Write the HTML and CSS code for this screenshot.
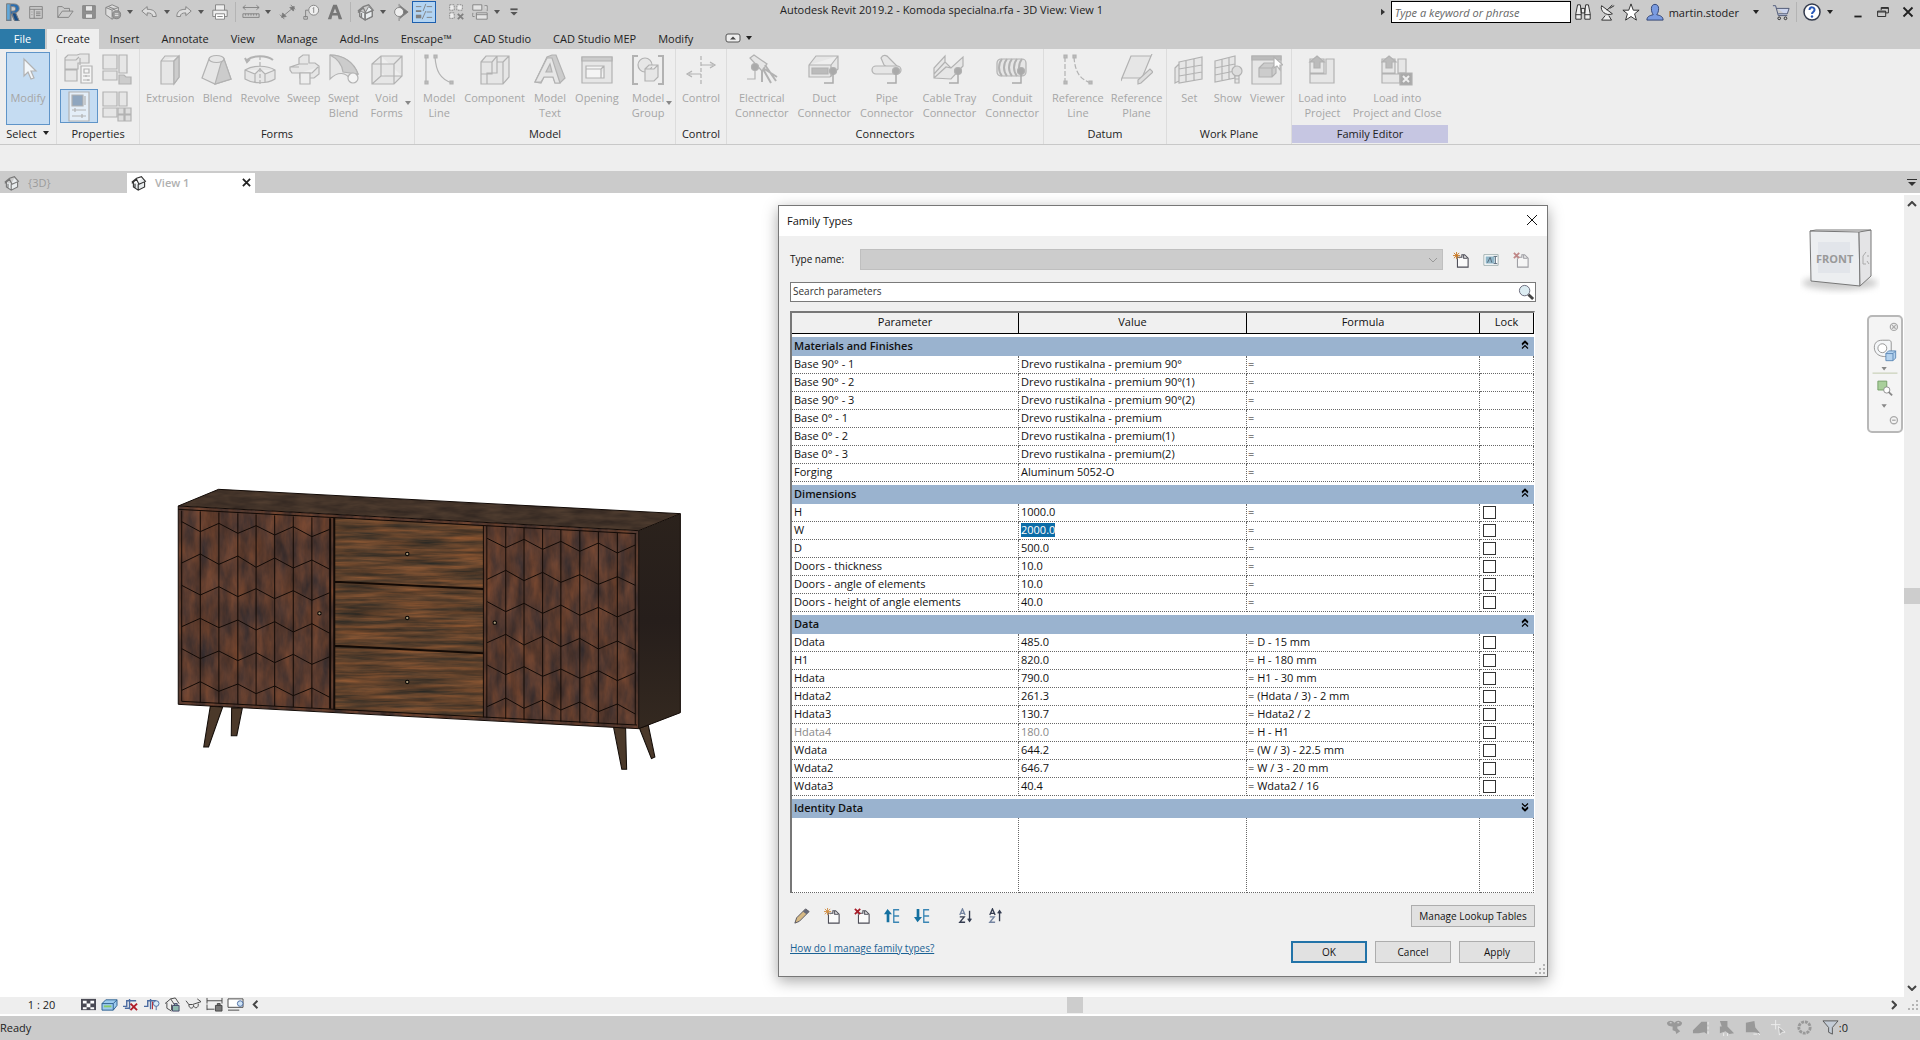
FILE: index.html
```html
<!DOCTYPE html>
<html lang="en">
<head>
    <meta charset="UTF-8">
    <meta name="viewport" content="width=device-width, initial-scale=1.0">
    <title>Autodesk Revit 2019.2 - Komoda specialna.rfa - 3D View: View 1</title>
    <link rel="stylesheet" href="styles.css">
</head>
<body>
    <!-- shared symbols -->
    <svg class="defs" width="0" height="0">
        <symbol id="i-down" viewBox="0 0 8 5"><path d="M1 0h6L4 4z" fill="currentColor"/></symbol>
        <symbol id="i-house" viewBox="0 0 20 20">
            <path d="M3 9v6l6 4V11zM9 19l8-4V8l-4-4-4 7z" fill="#e8ecee"/>
            <path d="M1 9l6-5 6-2 5 6-8 3.500-3-6-6 5M3 9v6l6 4 8-4V8M9 11.500V19M5 11v5" fill="none" stroke="currentColor" stroke-width="1.400"/>
        </symbol>
        <symbol id="i-page" viewBox="0 0 18 18">
            <path d="M4 6h6V3h3l4 4v10H5V7M12 3v4h4" fill="#fafafa" stroke="#4c4c56" stroke-width="1.200"/>
        </symbol>
        <symbol id="i-collapse" viewBox="0 0 8 10"><path d="M1 4l3-3 3 3M1 8.500l3-3 3 3M1 5l3-3 3 3" fill="none" stroke="#000" stroke-width="1.200"/></symbol>
        <symbol id="i-dot" viewBox="0 0 32 32"><circle cx="25" cy="17" r="3.500" fill="#aaa"/><path d="M25 20v9h-9" fill="none" stroke="#aaa" stroke-width="1.500"/></symbol>
    </svg>

    <header class="titlebar">
        <div class="quick-access">
            <button class="tb" aria-label="Revit"><svg viewBox="0 0 20 20"><path d="M4 1h8c4 0 6 2 6 5s-2 4-4 5l4 9h-5l-4-8v8H4zM9 4v5c3 0 5 0 5-2.500S12 4 9 4z" fill="#2a6db0"/><path d="M4 1h4v18H4z" fill="#5fa8dc"/><path d="M10 11l4 0 4 9h-5z" fill="#174c86"/></svg></button>
            <button class="tb" aria-label="Recent"><svg viewBox="0 0 20 20"><path d="M3 4h14v13H3zM3 7h14M8 7v10" /><path d="M10 10h5M10 12h5M10 14h5M5 10h1M5 13h1"/></svg></button>
            <span class="space"></span>
            <button class="tb" aria-label="Open"><svg viewBox="0 0 20 20"><path d="M2 16V4h5l2 2h6v3M2 16l5-7h12l-5 7z"/></svg></button>
            <button class="tb" aria-label="Save"><svg viewBox="0 0 20 20"><path d="M3 3h14v14H3z" fill="#909090"/><path d="M6 3h8v6H6zM6 12h8v5H6z" fill="#e8e8e8"/></svg></button>
            <button class="tb" aria-label="Sync"><svg viewBox="0 0 20 20"><path d="M2 5l7-3 7 3v8l-7 5-7-5zM2 5l7 3 7-3M9 8v10M5 4l7 3" fill="#ddd"/><circle cx="14" cy="13" r="4.500" fill="#999"/><path d="M12 12h4M16 14h-4" stroke="#eee"/></svg></button>
            <button class="tb-arrow" aria-label="Sync options"><svg><use href="#i-down"/></svg></button>
            <span class="space small"></span>
            <button class="tb" aria-label="Undo"><svg viewBox="0 0 20 20"><path d="M2 9l6-5v3c6 0 10 2 10 8h-4c0-3-2-4-6-4v3z" fill="#ddd"/></svg></button>
            <button class="tb-arrow" aria-label="Undo list"><svg><use href="#i-down"/></svg></button>
            <button class="tb" aria-label="Redo"><svg viewBox="0 0 20 20"><path d="M18 9l-6-5v3C6 7 2 9 2 15h4c0-3 2-4 6-4v3z" fill="#ddd"/></svg></button>
            <button class="tb-arrow" aria-label="Redo list"><svg><use href="#i-down"/></svg></button>
            <span class="space small"></span>
            <button class="tb" aria-label="Print"><svg viewBox="0 0 20 20"><path d="M5 8V2h10v6M2 8h16v7H2z" fill="#eee"/><path d="M5 12h10v6H5zM7 15h6" fill="#fff"/></svg></button>
            <span class="sep"></span>
            <button class="tb" aria-label="Measure"><svg viewBox="0 0 20 20"><path d="M1 5h18M4 2.500L1 5l3 2.500M16 2.500L19 5l-3 2.500M1 12h18v4H1zM4 12v2M7 12v2M10 12v2M13 12v2M16 12v2"/></svg></button>
            <button class="tb-arrow" aria-label="Measure options"><svg><use href="#i-down"/></svg></button>
            <span class="space small"></span>
            <button class="tb" aria-label="Aligned dimension"><svg viewBox="0 0 20 20"><path d="M4 15L16 5M1 13l5 5M13 2l5 5"/><path d="M3 16l1-5 4 4zM17 4l-1 5-4-4z" fill="#777"/></svg></button>
            <button class="tb" aria-label="Tag"><svg viewBox="0 0 20 20"><circle cx="13" cy="8" r="5.500" fill="#eee"/><path d="M7 8H4v8M2 15h4v3H2zM12 6l1-1v6"/></svg></button>
            <button class="tb" aria-label="Text"><svg viewBox="0 0 20 20"><path d="M2 18L8 2h4l6 16h-4l-1-4H7l-1 4zM8 11h4l-2-5z" fill="#777" stroke="none"/></svg></button>
            <span class="sep"></span>
            <button class="tb" aria-label="3D view"><svg viewBox="0 0 20 20"><use href="#i-house"/></svg></button>
            <button class="tb-arrow" aria-label="3D options"><svg><use href="#i-down"/></svg></button>
            <button class="tb" aria-label="Section"><svg viewBox="0 0 20 20"><path d="M10 3l9 7-9 7z" fill="#777"/><circle cx="9" cy="10" r="5" fill="#eee"/><path d="M9 1v3M9 16v4"/></svg></button>
            <button class="tb tb-on" aria-label="Thin lines"><svg viewBox="0 0 20 20"><path d="M1 4h6" stroke-width="1"/><path d="M1 9h6" stroke-width="2"/><path d="M1 15h6" stroke-width="4"/><path d="M13 4h6M13 10h6M13 16h6M12 1L9 9M12 9L8 18" /></svg></button>
            <span class="space"></span>
            <span class="space small"></span>
            <button class="tb" aria-label="Close hidden"><svg viewBox="0 0 20 20"><path d="M3 2h5v6H3zM11 2h6v6h-6zM3 11h5v6H3z" fill="#eee" stroke-dasharray="2 1"/><path d="M12 12l6 6M18 12l-6 6" stroke-width="2"/></svg></button>
            <button class="tb" aria-label="Switch windows"><svg viewBox="0 0 20 20"><path d="M2 2h10v6H2zM6 11h12v7H6zM15 3h3v6M2 11v4h2" fill="#e4e4e4"/><path d="M6 13h12"/></svg></button>
            <button class="tb-arrow" aria-label="Windows"><svg><use href="#i-down"/></svg></button>
            <button class="tb" aria-label="Customize"><svg viewBox="0 0 20 20"><path d="M6 7h8" stroke="#555" stroke-width="2"/><path d="M6 10h8l-4 4z" fill="#555" stroke="none"/></svg></button>
        </div>
        <div class="app-title">Autodesk Revit 2019.2 - Komoda specialna.rfa - 3D View: View 1</div>
        <div class="info-center">
            <svg class="expand" viewBox="0 0 5 8"><path d="M0 0l5 4-5 4z" fill="#333"/></svg>
            <input class="help-search" type="text" placeholder="Type a keyword or phrase" aria-label="Help search">
            <button class="tb" aria-label="Search"><svg class="dark" viewBox="0 0 20 20"><path d="M4 2h3l1 8v8H2v-6zM13 2h3l2 10v6h-6v-8zM8 6h4v5H8zM2 13h6M12 13h6" fill="#eee"/></svg></button>
            <button class="tb" aria-label="Communication"><svg class="dark" viewBox="0 0 20 20"><path d="M4 3c-2 6 5 12 12 9zM8 14l-4 5h11l-3-5M10 8l6-6M13 6l5-3" fill="#eee"/></svg></button>
            <button class="tb" aria-label="Favorites"><svg class="dark" viewBox="0 0 20 20"><path d="M10 1l2.500 7H19l-5 4 2 7-6-4-6 4 2-7-5-4h6.500z" fill="#fff"/></svg></button>
            <button class="account"><svg class="dark" viewBox="0 0 20 20"><path d="M6 6c0-6 8-6 8 0 0 4-1 5-2 7 4 1 7 2 7 6H1c0-4 3-5 7-6-1-2-2-3-2-7z" fill="#7a9be0" stroke="#2a3d6e"/></svg><span>martin.stoder</span><svg class="arrow"><use href="#i-down"/></svg></button>
            <button class="tb" aria-label="Store"><svg class="dark" viewBox="0 0 20 20"><path d="M1 3h3l3 11h10M5 6h14l-2 6H7" fill="#ccd5ee" stroke="#46506e"/><circle cx="8" cy="17" r="1.500"/><circle cx="15" cy="17" r="1.500"/></svg></button>
            <span class="sep"></span>
            <button class="tb help" aria-label="Help"><svg viewBox="0 0 20 20"><circle cx="10" cy="10" r="8" fill="#fff" stroke="#333a4c" stroke-width="1.500"/><path d="M7.500 8c0-4 5.500-3 5 0-.3 2-2.500 2-2.500 4" stroke="#2858b8" stroke-width="2"/><circle cx="10" cy="14.500" r="1.200" fill="#2858b8" stroke="none"/></svg></button>
            <button class="tb-arrow" aria-label="Help options"><svg><use href="#i-down"/></svg></button>
            <div class="window-buttons">
                <button class="tb" aria-label="Minimize"><svg viewBox="0 0 20 20"><path d="M6 15h8" stroke="#222" stroke-width="2"/></svg></button>
                <button class="tb" aria-label="Restore"><svg viewBox="0 0 20 20"><path d="M8 8V5h8v6h-3M4 9h9v6H4zM4 10h9M8 6h8" stroke="#222"/></svg></button>
                <button class="tb" aria-label="Close"><svg viewBox="0 0 20 20"><path d="M5 5l10 10M15 5L5 15" stroke="#222" stroke-width="2"/></svg></button>
            </div>
        </div>
    </header>

    <nav class="ribbon-tabs">
        <button class="file-tab">File</button>
        <button class="active">Create</button>
        <button>Insert</button>
        <button>Annotate</button>
        <button>View</button>
        <button>Manage</button>
        <button>Add-Ins</button>
        <button>Enscape™</button>
        <button>CAD Studio</button>
        <button>CAD Studio MEP</button>
        <button>Modify</button>
        <button class="tab-toggle" aria-label="Minimize ribbon"><svg width="16" height="10" viewBox="0 0 16 10"><rect x="1" y="1" width="14" height="8" rx="2" fill="#eee" stroke="#555"/><path d="M5 6.500h6L8 3.500z" fill="#444"/></svg><svg class="arrow"><use href="#i-down"/></svg></button>
    </nav>

    <section class="ribbon">
        <div class="panel panel-select">
            <div class="panel-body">
                <button class="tool modify" disabled><svg viewBox="0 0 32 32"><path d="M12 5v17l4-4 3 7 3-1-3-7h5z" fill="#f2f6fa"/></svg>Modify</button>
            </div>
            <div class="panel-name">Select <svg class="arrow"><use href="#i-down"/></svg></div>
        </div>
        <div class="panel panel-properties">
            <div class="panel-body quad">
                <button disabled aria-label="Family category"><svg viewBox="0 0 32 32"><path d="M2 5l3-3h9l3-1h9v9H15v6H2zM2 17h12v11H2zM2 16V7h11l3-3M17 12V5" /><path d="M18 13h11v17H18zM21 16h5v4h-5zM20 23h7M20 27h7M23 22v2M25 26v2" fill="#f4f4f4"/></svg></button>
                <button disabled aria-label="Family types"><svg viewBox="0 0 32 32"><path d="M2 2h14v14H2zM18 2h8v18h-8zM2 18h14v9H2z"/><path d="M18 22h5l2 2h5v7H18z" fill="#ccc"/></svg></button>
                <button class="on" disabled aria-label="Properties"><svg viewBox="0 0 32 32"><path d="M6 2h20v29H6z" fill="#e4eef8"/><path d="M9 5h11v11H9z" fill="#8fa6bf"/><path d="M22 6v9M9 20h14M12 18v4M9 26h14M19 24v4"/></svg></button>
                <button disabled aria-label="Type list"><svg viewBox="0 0 32 32"><path d="M2 2h14v14H2zM18 2h8v14h-8zM2 18h14v9H2z"/><path d="M17 18h6v6h-6zM24 18h6v6h-6zM17 25h6v6h-6zM24 25h6v6h-6z" fill="#ddd"/></svg></button>
            </div>
            <div class="panel-name">Properties</div>
        </div>
        <div class="panel panel-forms">
            <div class="panel-body packed">
                <button class="tool" disabled><svg viewBox="0 0 32 32"><path d="M7 7l4-5h14v21l-5 7H7zM7 7h13l5-5M20 7v23"/><path d="M20 7l5-5v21l-5 7z" fill="#ccc"/></svg>Extrusion</button>
                <button class="tool" disabled><svg viewBox="0 0 32 32"><path d="M8 5L1 24l13 6 16-5L23 5z"/><path d="M20 9L14 30l16-5-7-20z" fill="#ccc"/><ellipse cx="15.500" cy="5" rx="7.500" ry="3.500"/></svg>Blend</button>
                <button class="tool" disabled><svg viewBox="0 0 32 32"><path d="M1 16c8-5 22-5 30 0v9c-8 5-22 5-30 0zM1 16l10 4 5-5 5 5 10-4M11 20v8M21 20v8"/><path d="M3 6c6-5 20-5 26 0M1 4l2 4 3-3" fill="none" stroke-width="2"/><path d="M16 2v30" stroke-dasharray="4 2"/></svg>Revolve</button>
                <button class="tool" disabled><svg viewBox="0 0 32 32"><path d="M2 13l9-3V4l4-3h6v8h6l4 3v8l-5 4H12v-5H4l-2-3zM11 10h9M12 19h12l6-6M2 13h9"/><path d="M12 19h10v11H12z" fill="#eee"/></svg>Sweep</button>
                <button class="tool" disabled><svg viewBox="0 0 32 32"><path d="M2 1c15 0 24 9 28 19l-7 6C18 18 10 17 2 25z"/><path d="M2 1c8 4 12 9 13 17l15 2C26 8 15 1 2 1z" fill="#ccc"/><circle cx="25" cy="24" r="5" fill="#f4f4f4"/></svg>Swept<br>Blend</button>
                <button class="tool menu" disabled><svg viewBox="0 0 32 32"><path d="M1 10l9-8h21v20l-8 8H1zM1 10h22v20M23 10l8-8M10 2v20h21M10 22l-9 8"/></svg>Void<br>Forms<svg class="arrow"><use href="#i-down"/></svg></button>
            </div>
            <div class="panel-name">Forms</div>
        </div>
        <div class="panel panel-model">
            <div class="panel-body packed wide">
                <button class="tool" disabled><svg viewBox="0 0 32 32"><path d="M3 3v26M12 3c1 14 5 22 17 26" fill="none"/><path d="M2 1h3v3H2zM11 1h3v3h-3zM2 27h3v3H2zM27 27h3v3h-3z" fill="#bbb"/></svg>Model<br>Line</button>
                <button class="tool" disabled><svg viewBox="0 0 32 32"><path d="M2 8l5-6h11v17H8v11H2zM13 20V8l5-6h12v21l-6 7H2V20zM18 8h6v22M24 8l6-6M2 8h11"/></svg>Component</button>
                <button class="tool" disabled><svg viewBox="0 0 32 32"><path d="M1 28L13 3l5-2h4l9 23-5 5h-5l-2-6H10l-3 6z" fill="#ccc"/><path d="M1 28L13 4h5l8 25h-5l-2-6H10l-3 5zM12 18h6l-2-8z"/></svg>Model<br>Text</button>
                <button class="tool" disabled><svg viewBox="0 0 32 32"><path d="M1 3h30v26H1z"/><path d="M1 3h30v4H1z" fill="#ccc"/><path d="M5 12h18v12H5zM23 12l-3 3v9M5 15h15" fill="#f4f4f4"/></svg>Opening</button>
                <button class="tool menu" disabled><svg viewBox="0 0 32 32"><path d="M6 2H1v28h5M26 2h5v28h-5" fill="none" stroke-width="2"/><circle cx="13" cy="11" r="7"/><path d="M13 15l4-4h9v12l-4 4h-9zM13 15h9l4-4" /></svg>Model<br>Group<svg class="arrow"><use href="#i-down"/></svg></button>
            </div>
            <div class="panel-name">Model</div>
        </div>
        <div class="panel panel-control">
            <div class="panel-body">
                <button class="tool" disabled><svg viewBox="0 0 32 32"><path d="M16 2v28" stroke-dasharray="4 2"/><path d="M16 11h12M25 8l5 3-5 3M16 20H4M7 17l-5 3 5 3" /></svg>Control</button>
            </div>
            <div class="panel-name">Control</div>
        </div>
        <div class="panel panel-connectors">
            <div class="panel-body packed wide">
                <button class="tool" disabled><svg viewBox="0 0 32 32"><path d="M4 4l4-3 13 9-5 7z"/><path d="M17 14l14 9M17 15l8 14M16 16v12M19 11l11 16" stroke-width="2"/><circle cx="9" cy="13" r="3.500" fill="#aaa"/><path d="M9 16v9H1" fill="none"/></svg>Electrical<br>Connector</button>
                <button class="tool" disabled><svg viewBox="0 0 32 32"><path d="M1 11l7-9h22v13l-8 8H1zM1 11h22l7-9M23 11v12"/><path d="M4 14h16v6H4z" fill="#bbb"/><use href="#i-dot"/></svg>Duct<br>Connector</button>
                <button class="tool" disabled><svg viewBox="0 0 32 32"><path d="M10 4c2-4 6-3 8 0l9 9-4 6-10-8z"/><rect x="1" y="12" width="29" height="8" rx="4"/><use href="#i-dot"/></svg>Pipe<br>Connector</button>
                <button class="tool" disabled><svg viewBox="0 0 32 32"><path d="M1 24V14L12 2v6l6 6L30 3v9L18 25zM1 24l12-11 5 1M12 8L1 20"/><use href="#i-dot"/></svg>Cable Tray<br>Connector</button>
                <button class="tool" disabled><svg viewBox="0 0 32 32"><rect x="1" y="5" width="29" height="17" rx="4"/><path d="M6 5c-4 5-4 12 0 17M11 5c-4 5-4 12 0 17M16 5c-4 5-4 12 0 17M21 5c-4 5-4 12 0 17M26 5c-4 5-4 12 0 17" stroke-width="2"/><use href="#i-dot"/></svg>Conduit<br>Connector</button>
            </div>
            <div class="panel-name">Connectors</div>
        </div>
        <div class="panel panel-datum">
            <div class="panel-body packed wide">
                <button class="tool" disabled><svg viewBox="0 0 32 32"><path d="M3 3v26M12 3c1 14 5 22 17 26" fill="none" stroke-dasharray="5 2"/><path d="M2 1h3v3H2zM11 1h3v3h-3zM2 27h3v3H2zM27 27h3v3h-3z" fill="#bbb"/></svg>Reference<br>Line</button>
                <button class="tool" disabled><svg viewBox="0 0 32 32"><path d="M10 2h20l-9 22H1zM1 24l-1 3M30 2l1-2"/><path d="M17 30v-4l12-11 3 3-12 11z" fill="#ddd"/></svg>Reference<br>Plane</button>
            </div>
            <div class="panel-name">Datum</div>
        </div>
        <div class="panel panel-workplane">
            <div class="panel-body">
                <button class="tool" disabled><svg viewBox="0 0 32 32"><path d="M2 14l4-4v17l-4 2zM6 8l23-5v22L6 29zM6 15l23-4M6 22l23-4M13 7v21M21 5v21"/></svg>Set</button>
                <button class="tool" disabled><svg viewBox="0 0 32 32"><path d="M3 7l20-5v22L3 28zM3 14l20-4M3 21l20-4M10 5v21M17 3v22"/><circle cx="25" cy="17" r="5" fill="#ddd"/><path d="M23 22h4v7h-4zM23 25h4"/></svg>Show</button>
                <button class="tool" disabled><svg viewBox="0 0 32 32"><path d="M1 2h29v28H1z"/><path d="M1 2h29v4H1z" fill="#bbb"/><path d="M8 14l5-5h12v10l-4 4H8zM8 14h13v9M21 14l4-5" fill="#ccc"/><path d="M23 3v11l3-2 3 4v-5h3z" fill="#fff"/></svg>Viewer</button>
            </div>
            <div class="panel-name">Work Plane</div>
        </div>
        <div class="panel panel-family">
            <div class="panel-body">
                <button class="tool" disabled><svg viewBox="0 0 32 32"><path d="M4 5h14v14H4zM20 5h8v24H4V20h16z"/><path d="M11 2l7 6h-4v6H8V8H4z" fill="#bbb"/></svg>Load into<br>Project</button>
                <button class="tool" disabled><svg viewBox="0 0 32 32"><path d="M1 5h13v14H1zM17 5h8v14h-8zM1 20h18v9H1z"/><path d="M8 2l7 6h-4v6H5V8H1z" fill="#bbb"/><path d="M19 19h12v12H19z" fill="#aaa"/><path d="M22 22l6 6M28 22l-6 6" stroke="#eee" stroke-width="2"/></svg>Load into<br>Project and Close</button>
            </div>
            <div class="panel-name">Family Editor</div>
        </div>
    </section>
    <div class="options-bar"></div>

    <nav class="view-tabs">
        <button class="view-tab faded"><svg viewBox="0 0 20 20"><use href="#i-house"/></svg>{3D}</button>
        <button class="view-tab current"><svg viewBox="0 0 20 20"><use href="#i-house"/></svg>View 1<svg class="close" viewBox="0 0 10 10"><path d="M1 1l8 8M9 1L1 9" stroke="#222" stroke-width="2"/></svg></button>
        <button class="tab-list" aria-label="Tab list"><svg width="10" height="8" viewBox="0 0 10 8"><path d="M0 0h10v1H0zM1 3h8L5 7z" fill="#333"/></svg></button>
    </nav>

    <main class="workspace">
        <div class="view">
            <div class="canvas">
                <svg class="cabinet" viewBox="0 0 1568 960" preserveAspectRatio="none">
                    <defs>
                        <filter id="wood-h" x="0" y="0" width="100%" height="100%" color-interpolation-filters="sRGB">
                            <feTurbulence type="fractalNoise" baseFrequency="0.006 0.08" numOctaves="4" seed="8"/>
                            <feColorMatrix values="0.5 0 0 0 0.12  0.24 0.03 0 0 0.12  0.08 0.04 0 0 0.11  0 0 0 0 1"/>
                            <feComposite in2="SourceGraphic" operator="in"/>
                        </filter>
                        <filter id="wood-v" x="0" y="0" width="100%" height="100%" color-interpolation-filters="sRGB">
                            <feTurbulence type="fractalNoise" baseFrequency="0.03 0.01" numOctaves="4" seed="3"/>
                            <feColorMatrix values="0.36 0 0 0 0.16  0.16 0.03 0 0 0.13  0.04 0.06 0 0 0.13  0 0 0 0 1"/>
                            <feComposite in2="SourceGraphic" operator="in"/>
                        </filter>
                        <filter id="wood-top" x="0" y="0" width="100%" height="100%" color-interpolation-filters="sRGB">
                            <feTurbulence type="fractalNoise" baseFrequency="0.015 0.06" numOctaves="3" seed="5"/>
                            <feColorMatrix values="0.16 0 0 0 0.18  0.12 0 0 0 0.14  0.08 0 0 0 0.12  0 0 0 0 1"/>
                            <feComposite in2="SourceGraphic" operator="in"/>
                        </filter>
                        <linearGradient id="side" x1="0" x2="0" y1="0" y2="1"><stop offset="0" stop-color="#2b221c"/><stop offset="0.500" stop-color="#261e1b"/><stop offset="1" stop-color="#342920"/></linearGradient>
                    </defs>
                    <g fill="#4b392a" stroke="#120c08">
                        <path d="M146 709l36 2-41 120-14 0zM208 713l31 2-16 82h-16zM1317 772l35 2 3 124h-14zM1392 774l26-8 19 95-10 5z" stroke-width="3"/>
                    </g>
                    <path d="M53 108L170 58l1341 73-121 51z" filter="url(#wood-top)"/>
                    <path d="M53 108l1337 74v594L53 703z" filter="url(#wood-v)"/>
                    <path d="M507 143l432 24v576L507 718z" filter="url(#wood-h)"/>
                    <path d="M1390 182l121-51v597l-121 48z" fill="url(#side)"/>
                    <g class="lines">
                        <path d="M53 108L170 58l1341 73-121 51zM53 108v595l1337 73 121-48V131M1390 182v594M53 118l1330 73M63 694l1322 71M63 122v572M1380 192v572"/>
                        <path d="M117 124v573M171 127v573M226 130v572M279 133v572M333 136v572M387 139v572M441 142v572"/>
                        <path d="M1004 171v576M1057 174v576M1111 177v575M1164 180v575M1219 183v575M1273 186v574M1328 189v574"/>
                        <path d="M63 155L117 185 171 160 226 190 279 167 333 195 387 170 441 200 493 178M63 279L117 252 171 283 226 258 279 292 333 264 387 294 441 270 493 298M63 346L117 375 171 350 226 380 279 356 333 386 387 362 441 391 493 368M63 470L117 445 171 473 226 450 279 480 333 455 387 486 441 461 493 490M63 536L117 566 171 543 226 572 279 548 333 578 387 553 441 583 493 560M63 661L117 635 171 664 226 642 279 671 333 648 387 677 441 654 493 682"/>
                        <path d="M950 205L1004 233 1057 208 1111 238 1164 214 1219 244 1273 219 1328 249 1380 225M950 328L1004 301 1057 332 1111 307 1164 337 1219 314 1273 343 1328 320 1380 346M950 395L1004 425 1057 400 1111 430 1164 405 1219 436 1273 412 1328 441 1380 417M950 518L1004 493 1057 525 1111 499 1164 530 1219 505 1273 537 1328 513 1380 540M950 585L1004 614 1057 590 1111 619 1164 597 1219 625 1273 602 1328 632 1380 608M950 710L1004 684 1057 715 1111 690 1164 720 1219 696 1273 725 1328 702 1380 732"/>
                        <path class="thick" d="M494 145v571M506 143v575M507 335l432 22M507 527l432 23"/>
                        <path d="M939 166v576M949 168v575"/>
                    </g>
                    <g fill="#a89878" stroke="#000" stroke-width="3"><circle cx="718" cy="252" r="5"/><circle cx="718" cy="444" r="5"/><circle cx="718" cy="636" r="5"/><circle cx="463" cy="430" r="5"/><circle cx="972" cy="458" r="5"/></g>
                </svg>
                <svg class="view-cube" viewBox="0 0 80 70">
                    <ellipse cx="40" cy="58" rx="38" ry="7" fill="#ccc" filter="blur(3px)"/>
                    <path d="M10 6l49 1 1 54-49-5z" fill="#eceef0" stroke="#777"/>
                    <path d="M59 7l12-2v46l-11 10z" fill="#e4e4e6" stroke="#777"/>
                    <path d="M10 6l6-1 55 0" fill="none" stroke="#777"/>
                    <path d="M18 17h32v31H18z" fill="#e2e5ea"/>
                    <path d="M66 27l-3 4v8h3M68 30v2M67 36l2 3" fill="none" stroke="#aaa"/>
                    <text x="16" y="38">FRONT</text>
                </svg>
                <div class="nav-bar">
                    <svg viewBox="0 0 36 118">
                        <g fill="none" stroke="#aaa" stroke-width="1.500"><circle cx="28" cy="6" r="4"/><path d="M26 4l4 4M30 4l-4 4"/><circle cx="28" cy="111" r="4"/><path d="M26 111h4"/></g>
                        <path d="M6 29c0-5 3-8 9-8h7c2 0 3 1 3 3v13c-3 4-19 4-19-8z" fill="#f4f6f8" stroke="#8c8c8c"/><circle cx="15" cy="30" r="5" fill="#fff" stroke="#8c8c8c"/>
                        <path d="M19 36l3-3h8v8l-3 3h-8zM19 36h8v8M27 36l3-3" fill="#b4d2ee" stroke="#5a86b4"/>
                        <path d="M14 51h6l-3 4zM14 93h6l-3 4z" fill="#888"/><path d="M4 58h28" stroke="#b9c4a4"/>
                        <path d="M10 67h10v10H10z" fill="#a9cf9b" stroke="#6f9a62"/><circle cx="20" cy="77" r="3.500" fill="#fff" stroke="#888"/><path d="M22 79l4 4" stroke="#888" stroke-width="2"/>
                    </svg>
                </div>
            </div>
            <div class="vscroll">
                <svg width="10" height="6" viewBox="0 0 10 6"><path d="M1 5l4-4 4 4" /></svg>
                <div class="thumb"></div>
                <svg width="10" height="6" viewBox="0 0 10 6"><path d="M1 1l4 4 4-4" /></svg>
            </div>
        </div>
        <div class="view-bar">
            <button class="scale">1 : 20</button>
            <div class="view-controls">
                <button aria-label="Detail level"><svg viewBox="0 0 18 16"><path d="M1 2h16v12H1z" fill="#4a4a54"/><path d="M3 4h4v3H3zM11 4h4v3h-4zM7 7h4v4H7zM3 11h4v2H3zM11 11h4v2h-4z" fill="#fff"/></svg></button>
                <button aria-label="Visual style"><svg viewBox="0 0 18 16"><path d="M1 7l4-4h12v6l-4 5H1zM1 7h12v7M13 7l4-4" fill="#9ccbee" stroke="#2c5f90"/><path d="M3 9h8v2H3z" fill="#8c6"/></svg></button>
                <button aria-label="Crop view"><svg viewBox="0 0 18 16"><path d="M1 10h4V4h10M8 2v11M3 12h5" fill="none" stroke="#4a6aa0" stroke-width="1.500"/><path d="M9 7l7 7M16 7l-7 7" stroke="#b01c28" stroke-width="2"/></svg></button>
                <button aria-label="Show crop"><svg viewBox="0 0 18 16"><path d="M1 10h4V4h9M8 2v11" fill="none" stroke="#4a6aa0" stroke-width="1.500"/><path d="M10 5v8" stroke="#b01c28"/><circle cx="14" cy="7" r="3" fill="#d8ecfa" stroke="#4a6aa0"/><path d="M14 10v4" stroke="#4a6aa0"/></svg></button>
                <button aria-label="Lock 3D view"><svg viewBox="0 0 18 16"><path d="M1 7l6-5 5-1 4 6M3 6v6l5 3M8 8v6M7 2l4 6" fill="none" stroke="#444"/><path d="M9 9h7v6H9zM11 9V7h3v2" fill="#8db8ae" stroke="#446"/></svg></button>
                <button aria-label="Temporary hide"><svg viewBox="0 0 18 16"><path d="M1 4l3 4h4l9-3-4-3M4 8c0 5 5 5 5 1 1 4 6 3 5-2" fill="none" stroke="#444"/></svg></button>
                <button aria-label="Constraints"><svg viewBox="0 0 18 16"><path d="M1 1v6M17 1v6M1 4h16M1 8v6M1 13h8" fill="none" stroke="#444"/><path d="M10 9h7v6h-7zM12 9V7h3v2" fill="#777" stroke="#444"/></svg></button>
                <button aria-label="Reveal hidden"><svg viewBox="0 0 18 16"><path d="M1 2h16v9H1zM1 14h12" fill="#fff" stroke="#444"/><circle cx="14" cy="7" r="3" fill="#cfe4f6" stroke="#4a6aa0"/></svg></button>
                <button aria-label="Scroll left"><svg viewBox="0 0 18 16"><path d="M10 4L6 8l4 4" fill="none" stroke="#444" stroke-width="2"/></svg></button>
            </div>
            <div class="hscroll"><div class="thumb"></div></div>
            <svg class="scroll-right" width="6" height="10" viewBox="0 0 6 10"><path d="M1 1l4 4-4 4"/></svg>
            <svg class="grip" width="10" height="10" viewBox="0 0 10 10"><path d="M8 0h2v2H8zM8 4h2v2H8zM8 8h2v2H8zM4 4h2v2H4zM4 8h2v2H4zM0 8h2v2H0z"/></svg>
        </div>

        <section class="dialog" role="dialog" aria-label="Family Types">
            <div class="dialog-title">
                <span>Family Types</span>
                <button aria-label="Close"><svg width="12" height="12" viewBox="0 0 12 12"><path d="M1 1l10 10M11 1L1 11" stroke="#111"/></svg></button>
            </div>
            <div class="dialog-body">
                <div class="type-row">
                    <label for="typeName">Type name:</label>
                    <div class="type-select">
                        <select id="typeName" disabled></select>
                        <svg width="9" height="6" viewBox="0 0 9 6"><path d="M0 1l4 4 4-4" fill="none" stroke="#999"/></svg>
                    </div>
                    <button class="icon-btn" aria-label="New type"><svg viewBox="0 0 18 18"><use href="#i-page"/><path d="M4 0v8M0 4h8M1 1l6 6M7 1L1 7" stroke="#c8741c"/></svg></button>
                    <button class="icon-btn" aria-label="Rename type"><svg viewBox="0 0 18 18"><path d="M1 3h16v12H1z" fill="#fff" stroke="#9aa"/><path d="M3 5h10v8H3z" fill="#8fb6c8"/><path d="M5 12l3-6 2 6M12 5h4M14 5v8M12 13h4" fill="none" stroke="#567"/></svg></button>
                    <button class="icon-btn faded" aria-label="Delete type"><svg viewBox="0 0 18 18"><use href="#i-page"/><path d="M1 1l6 6M7 1L1 7" stroke="#902020" stroke-width="2"/></svg></button>
                </div>
                <div class="search-row">
                    <input type="text" placeholder="Search parameters" aria-label="Search parameters">
                    <svg viewBox="0 0 18 18"><path d="M11 11l5 5" stroke="#444" stroke-width="3"/><circle cx="7" cy="7" r="5.500" fill="#dcecf2" stroke="#667"/></svg>
                </div>
                <div class="grid">
                <table>
                    <colgroup><col class="c-param"><col class="c-value"><col class="c-formula"><col class="c-lock"></colgroup>
                    <thead>
                        <tr><th>Parameter</th><th>Value</th><th>Formula</th><th>Lock</th></tr>
                    </thead>
                    <tbody>
                        <tr class="group"><th colspan="4"><div>Materials and Finishes<button aria-label="Collapse"><svg><use href="#i-collapse"/></svg></button></div></th></tr>
                        <tr><td>Base 90° - 1</td><td>Drevo rustikalna - premium 90°</td><td>=</td><td></td></tr>
                        <tr><td>Base 90° - 2</td><td>Drevo rustikalna - premium 90°(1)</td><td>=</td><td></td></tr>
                        <tr><td>Base 90° - 3</td><td>Drevo rustikalna - premium 90°(2)</td><td>=</td><td></td></tr>
                        <tr><td>Base 0° - 1</td><td>Drevo rustikalna - premium</td><td>=</td><td></td></tr>
                        <tr><td>Base 0° - 2</td><td>Drevo rustikalna - premium(1)</td><td>=</td><td></td></tr>
                        <tr><td>Base 0° - 3</td><td>Drevo rustikalna - premium(2)</td><td>=</td><td></td></tr>
                        <tr><td>Forging</td><td>Aluminum 5052-O</td><td>=</td><td></td></tr>
                    </tbody>
                    <tbody>
                        <tr class="group"><th colspan="4"><div>Dimensions<button aria-label="Collapse"><svg><use href="#i-collapse"/></svg></button></div></th></tr>
                        <tr><td>H</td><td>1000.0</td><td>=</td><td><input type="checkbox" aria-label="Lock H"></td></tr>
                        <tr><td>W</td><td><span class="selected">2000.0</span></td><td>=</td><td><input type="checkbox" aria-label="Lock W"></td></tr>
                        <tr><td>D</td><td>500.0</td><td>=</td><td><input type="checkbox" aria-label="Lock D"></td></tr>
                        <tr><td>Doors - thickness</td><td>10.0</td><td>=</td><td><input type="checkbox" aria-label="Lock thickness"></td></tr>
                        <tr><td>Doors - angle of elements</td><td>10.0</td><td>=</td><td><input type="checkbox" aria-label="Lock angle"></td></tr>
                        <tr><td>Doors - height of angle elements</td><td>40.0</td><td>=</td><td><input type="checkbox" aria-label="Lock height"></td></tr>
                    </tbody>
                    <tbody>
                        <tr class="group"><th colspan="4"><div>Data<button aria-label="Collapse"><svg><use href="#i-collapse"/></svg></button></div></th></tr>
                        <tr><td>Ddata</td><td>485.0</td><td>= D - 15 mm</td><td><input type="checkbox" aria-label="Lock Ddata"></td></tr>
                        <tr><td>H1</td><td>820.0</td><td>= H - 180 mm</td><td><input type="checkbox" aria-label="Lock H1"></td></tr>
                        <tr><td>Hdata</td><td>790.0</td><td>= H1 - 30 mm</td><td><input type="checkbox" aria-label="Lock Hdata"></td></tr>
                        <tr><td>Hdata2</td><td>261.3</td><td>= (Hdata / 3) - 2 mm</td><td><input type="checkbox" aria-label="Lock Hdata2"></td></tr>
                        <tr><td>Hdata3</td><td>130.7</td><td>= Hdata2 / 2</td><td><input type="checkbox" aria-label="Lock Hdata3"></td></tr>
                        <tr><td class="unused">Hdata4</td><td class="unused">180.0</td><td>= H - H1</td><td><input type="checkbox" aria-label="Lock Hdata4"></td></tr>
                        <tr><td>Wdata</td><td>644.2</td><td>= (W / 3) - 22.5 mm</td><td><input type="checkbox" aria-label="Lock Wdata"></td></tr>
                        <tr><td>Wdata2</td><td>646.7</td><td>= W / 3 - 20 mm</td><td><input type="checkbox" aria-label="Lock Wdata2"></td></tr>
                        <tr><td>Wdata3</td><td>40.4</td><td>= Wdata2 / 16</td><td><input type="checkbox" aria-label="Lock Wdata3"></td></tr>
                    </tbody>
                    <tbody>
                        <tr class="group"><th colspan="4"><div>Identity Data<button class="flip" aria-label="Expand"><svg><use href="#i-collapse"/></svg></button></div></th></tr>
                        <tr class="filler"><td></td><td></td><td></td><td></td></tr>
                    </tbody>
                </table>
                </div>
                <div class="tools-row">
                    <button class="icon-btn" aria-label="Edit parameter"><svg viewBox="0 0 18 18"><path d="M1 17l2-6L13 1l4 3L6 15z" fill="#d6b984" stroke="#4c4c56"/><path d="M13 1l4 3-3 3-4-3z" fill="#666a78"/></svg></button>
                    <button class="icon-btn" aria-label="New parameter"><svg viewBox="0 0 18 18"><use href="#i-page"/><path d="M4 0v8M0 4h8M1 1l6 6M7 1L1 7" stroke="#d08a3c"/></svg></button>
                    <button class="icon-btn" aria-label="Delete parameter"><svg viewBox="0 0 18 18"><use href="#i-page"/><path d="M1 1l6 6M7 1L1 7" stroke="#a81c28" stroke-width="2"/></svg></button>
                    <button class="icon-btn" aria-label="Move up"><svg viewBox="0 0 18 18"><path d="M4 1l5 6H6v9H3V7H0z" fill="#1470a0"/><path d="M17 2h-6v14h6M11 9h6" fill="none" stroke="#3a86b4" stroke-width="1.500"/></svg></button>
                    <button class="icon-btn" aria-label="Move down"><svg viewBox="0 0 18 18"><path d="M4 16l5-6H6V1H3v9H0z" fill="#1470a0"/><path d="M17 2h-6v14h6M11 9h6" fill="none" stroke="#3a86b4" stroke-width="1.500"/></svg></button>
                    <button class="icon-btn sort" aria-label="Sort ascending"><svg viewBox="0 0 18 18"><path d="M2 8l3-7 3 7M3 6h4" fill="none" stroke="#7484a0" stroke-width="1.500"/><path d="M2 10h5l-5 6h6M13 3v12M11 12l2 3 2-3" fill="none" stroke="#343c50" stroke-width="1.500"/></svg></button>
                    <button class="icon-btn" aria-label="Sort descending"><svg viewBox="0 0 18 18"><path d="M2 8l3-7 3 7M3 6h4M13 15V3M11 6l2-3 2 3" fill="none" stroke="#343c50" stroke-width="1.500"/><path d="M2 10h5l-5 6h6" fill="none" stroke="#7484a0" stroke-width="1.500"/></svg></button>
                    <button class="btn lookup">Manage Lookup Tables</button>
                </div>
                <div class="footer-row">
                    <a href="#">How do I manage family types?</a>
                    <button class="btn default">OK</button>
                    <button class="btn">Cancel</button>
                    <button class="btn">Apply</button>
                </div>
            </div>
            <svg class="grip" width="10" height="10" viewBox="0 0 10 10"><path d="M8 0h2v2H8zM8 4h2v2H8zM8 8h2v2H8zM4 4h2v2H4zM4 8h2v2H4zM0 8h2v2H0z"/></svg>
        </section>
    </main>

    <footer class="statusbar">
        <span>Ready</span>
        <div class="status-icons">
            <svg viewBox="0 0 18 18"><path d="M1 4c2-3 6-3 8 0 2-3 6-3 8 0 0 3-3 4-5 4v2l3 3-4 3-1-3-3-1V8C4 8 1 7 1 4z"/><path d="M4 4h2M12 4h2" stroke="#ddd"/></svg>
            <svg viewBox="0 0 18 18"><path d="M1 12l9-9h6v13l-3-2-6 1H1z"/><path d="M17 3v3M17 8v3M17 13v3" stroke="#eee"/></svg>
            <svg viewBox="0 0 18 18"><path d="M2 2h8v6l7 7-5 1-4-3-6 2V8h2z"/><path d="M6 15v3M10 15v3" stroke="#eee"/></svg>
            <svg viewBox="0 0 18 18"><path d="M2 4l9-2 1 7 5 6-6-1H2z"/><path d="M15 15l2 2M10 16h4" stroke="#eee"/></svg>
            <svg viewBox="0 0 18 18"><path d="M6 1v10M1 6h10M9 8l7 6-3 0-3 3z" fill="#aaa" stroke="#eee"/></svg>
            <svg viewBox="0 0 18 18"><circle cx="9" cy="9" r="6" fill="none" stroke="#999" stroke-width="3" stroke-dasharray="3 1"/></svg>
            <svg viewBox="0 0 18 18"><path d="M1 2h16l-6 7v7l-4-2V9z" fill="#c4ccd6" stroke="#555"/></svg>
            <span>:0</span>
        </div>
    </footer>
</body>
</html>
```
FILE: styles.css
```css
* {
    box-sizing: border-box;
}

body {
    margin: 0;
    height: 100vh;
    display: flex;
    flex-direction: column;
    overflow: hidden;
    background: #fff;
    color: #222;
    font-family: 'Open Sans', 'Noto Sans', sans-serif;
    font-size: 11px;
    line-height: 15px;
}

button {
    padding: 0;
    border: none;
    background: none;
    color: inherit;
    font: inherit;
}

svg {
    display: block;
    flex: none;
}

.defs {
    position: absolute;
}

.arrow {
    width: 8px;
    height: 5px;
}

/* title bar */
.titlebar {
    height: 29px;
    padding-bottom: 5px;
    background: #cbcbcb;
    display: flex;
    align-items: center;
    justify-content: space-between;
}

.quick-access,
.info-center,
.window-buttons {
    display: flex;
    align-items: center;
}

.quick-access {
    width: 526px;
    color: #555;
}

.tb {
    width: 24px;
    height: 22px;
    display: flex;
    align-items: center;
    justify-content: center;
}

.tb svg {
    width: 18px;
    height: 18px;
    fill: none;
    stroke: #808080;
    color: #808080;
}

.tb svg.dark,
.account .dark {
    stroke: #222;
}

.tb-on {
    background: #b3d4f2;
    border: 1px solid #1d5fae;
}

.tb-arrow {
    width: 11px;
    display: flex;
    justify-content: center;
}

.tb-arrow svg {
    width: 8px;
    height: 5px;
}

.space {
    width: 6px;
}

.space.small {
    width: 2px;
}

.sep {
    width: 1px;
    height: 20px;
    margin: 0 3px;
    background: #b4b4b4;
}

.app-title {
    flex: 1;
    padding: 0 0 5px 254px;
    white-space: nowrap;
}

.expand {
    width: 4px;
    height: 8px;
    margin-right: 6px;
}

.help-search {
    width: 180px;
    height: 22px;
    padding: 0 3px;
    border: 1px solid #000;
    background: #fff;
    font: italic 11px 'Open Sans', sans-serif;
}

.help-search::placeholder {
    color: #666;
}

.account {
    margin-left: 3px;
    display: flex;
    align-items: center;
    gap: 5px;
}

.account .dark {
    width: 18px;
    height: 18px;
}

.account .arrow {
    margin: 0 9px 0 8px;
}

.tb.help svg {
    width: 20px;
    height: 20px;
}

.window-buttons {
    margin-left: 11px;
    gap: 1px;
}

/* ribbon */
.ribbon-tabs {
    height: 20px;
    background: #cbcbcb;
    display: flex;
}

.ribbon-tabs button {
    padding: 0 11px 2px;
}

.ribbon-tabs .file-tab {
    width: 45px;
    margin-right: 2px;
    background: #2c7aa8;
    color: #fff;
}

.ribbon-tabs .active {
    padding: 0 9px 2px;
    background: #eee;
}

.ribbon-tabs .tab-toggle {
    margin-left: 10px;
    display: flex;
    align-items: center;
    gap: 4px;
}

.ribbon {
    height: 96px;
    background: #eee;
    border-bottom: 1px solid #c8c8c8;
    display: flex;
}

.panel {
    display: flex;
    flex-direction: column;
    border-right: 1px solid #dcdcdc;
}

.panel-select { width: 57px; }
.panel-properties { width: 83px; }
.panel-forms { width: 275px; }
.panel-model { width: 261px; }
.panel-control { width: 51px; }
.panel-connectors { width: 317px; }
.panel-datum { width: 123px; }
.panel-workplane { width: 125px; }
.panel-family { width: 156px; border: none; }

.panel-body {
    flex: 1;
    padding-top: 5px;
    display: flex;
    justify-content: space-evenly;
    align-items: flex-start;
}

.panel-body.packed {
    justify-content: flex-start;
    gap: 7px;
    padding-left: 6px;
}

.panel-body.wide {
    gap: 9px;
    padding-left: 8px;
}

.packed .menu {
    margin-left: 4px;
}

.panel-datum .wide {
    gap: 7px;
}

.panel-name {
    height: 18px;
    margin-bottom: 1px;
    padding-bottom: 2px;
    display: flex;
    align-items: center;
    justify-content: center;
    gap: 5px;
}

.panel-family .panel-name {
    background: #c6c6e2;
}

.tool {
    display: block;
    color: #a6a6a6;
    text-align: center;
    position: relative;
}

.tool svg,
.quad svg {
    width: 32px;
    height: 32px;
    margin: 0 auto 4px;
    fill: #e6e6e6;
    stroke: #b2b2b2;
    stroke-width: 1.200;
}

.tool .arrow {
    position: absolute;
    right: -9px;
    top: 47px;
    width: 8px;
    height: 5px;
    margin: 0;
    color: #888;
    stroke: none;
}

.panel-select .panel-body {
    padding-top: 3px;
}

.modify {
    width: 44px;
    height: 73px;
    padding: 1px 0 19px;
    border: 1px solid #5f94c8;
    background: #c5dcf2;
}

.panel-body.quad {
    padding: 3px 2px;
    flex-wrap: wrap;
    align-content: flex-start;
    gap: 3px 0;
}

.quad button {
    width: 38px;
    height: 34px;
    border: 1px solid transparent;
}

.quad svg {
    margin: 0 auto;
}

.quad .on {
    border-color: #5f94c8;
    background: #c5dcf2;
}

.options-bar {
    height: 26px;
    background: #eee;
}

.view-tabs {
    height: 22px;
    padding-top: 2px;
    background: #cbcbcb;
    display: flex;
}

.view-tab {
    width: 127px;
    padding: 0 4px 1px;
    display: flex;
    align-items: center;
    gap: 8px;
    color: #b0b0b0;
}

.view-tab svg {
    width: 16px;
    height: 16px;
    color: #333;
}

.view-tab.faded {
    color: #9c9c9c;
}

.view-tab.faded svg {
    color: #777;
}

.view-tab.current {
    width: 128px;
    background: #fff;
    font-weight: 600;
}

.view-tab .close {
    width: 9px;
    height: 9px;
    margin-left: auto;
}

.tab-list {
    margin-left: auto;
    padding-right: 3px;
}

/* drawing area */
.workspace {
    flex: 1;
    display: flex;
    flex-direction: column;
    position: relative;
    padding-bottom: 2px;
}

.view {
    flex: 1;
    display: flex;
    padding-top: 2px;
}

.canvas {
    flex: 1;
    position: relative;
}

.cabinet {
    position: absolute;
    left: 160px;
    top: 275px;
    width: 540px;
    height: 320px;
}

.lines path {
    fill: none;
    stroke: #120a06;
    stroke-width: 1px;
    vector-effect: non-scaling-stroke;
}

.lines .thick {
    stroke-width: 2px;
}

.view-cube {
    position: absolute;
    right: 24px;
    top: 30px;
    width: 80px;
    height: 70px;
}

.view-cube text {
    font-size: 11px;
    font-weight: 700;
    fill: #999;
}

.nav-bar {
    position: absolute;
    right: 1px;
    top: 120px;
    width: 36px;
    height: 118px;
    border: 2px solid #b8b8b8;
    border-radius: 5px;
    background: #f4f4f4;
}

.nav-bar svg {
    width: 32px;
    height: 114px;
}

.vscroll {
    width: 16px;
    padding: 6px 0;
    background: #eee;
    display: flex;
    flex-direction: column;
    align-items: center;
    justify-content: space-between;
}

.vscroll svg,
.scroll-right {
    fill: none;
    stroke: #444;
    stroke-width: 2;
}

.thumb {
    width: 16px;
    height: 16px;
    background: #cdcdcd;
}

.view-bar {
    height: 17px;
    padding-bottom: 2px;
    background: #eee;
    display: flex;
    align-items: center;
}

.scale {
    width: 78px;
    padding-left: 5px;
}

.view-controls {
    display: flex;
}

.view-controls button {
    width: 21px;
    display: flex;
    justify-content: center;
}

.view-controls svg {
    width: 17px;
    height: 15px;
}

.hscroll {
    flex: 1;
    display: flex;
    justify-content: center;
    padding-right: 8px;
}

.scroll-right {
    margin-right: 11px;
}

.grip {
    fill: #b4b4b4;
}

.view-bar .grip {
    margin-right: 2px;
}

/* family types dialog */
.dialog {
    position: absolute;
    left: 778px;
    top: 12px;
    width: 770px;
    border: 1px solid #777;
    background: #f0f0f0;
    color: #111;
    box-shadow: 0 4px 14px rgba(0, 0, 0, 0.35);
}

.dialog-title {
    height: 30px;
    padding: 0 9px 2px 8px;
    background: #fff;
    display: flex;
    align-items: center;
    justify-content: space-between;
}

.dialog-body {
    padding: 13px 11px;
}

.type-row {
    display: flex;
    align-items: center;
    height: 21px;
}

.type-row label {
    width: 70px;
    font-size: 10px;
}

.type-select {
    flex: 1;
    position: relative;
    margin-right: 3px;
}

.type-select select {
    display: block;
    width: 100%;
    height: 21px;
    border: 1px solid #bfbfbf;
    background: #ccc;
    appearance: none;
    opacity: 1;
}

.type-select svg {
    position: absolute;
    right: 5px;
    top: 8px;
}

.icon-btn {
    width: 30px;
    display: flex;
    justify-content: center;
}

.icon-btn svg {
    width: 16px;
    height: 16px;
}

.icon-btn.faded {
    opacity: 0.5;
}

.search-row {
    margin-top: 12px;
    height: 20px;
    border: 1px solid #7a7a7a;
    background: #fff;
    display: flex;
    align-items: center;
}

.search-row input {
    flex: 1;
    padding: 0 2px 2px;
    border: none;
    background: none;
    outline: none;
    font: 10px 'Open Sans', sans-serif;
}

.search-row input::placeholder {
    color: #333;
}

.search-row svg {
    width: 17px;
    height: 17px;
}

.grid {
    margin-top: 9px;
    margin-right: 1px;
    border: 1px solid #777;
    border-width: 2px 1px 0 2px;
    border-right-color: #fff;
    background: #fff;
}

table {
    width: 100%;
    table-layout: fixed;
    border-collapse: separate;
    border-spacing: 0;
}

.c-param { width: 227px; }
.c-value { width: 228px; }
.c-formula { width: 233px; }

thead th {
    height: 21px;
    padding: 0 0 3px;
    background: #f0f0f0;
    border-right: 1px solid #000;
    border-bottom: 1px solid #000;
    font-weight: 400;
}

td {
    height: 18px;
    padding: 0 2px 2px;
    border-right: 1px dotted #666;
    border-bottom: 1px dotted #666;
    line-height: 14px;
    white-space: nowrap;
}

td:nth-child(3) {
    padding-left: 1px;
}

.group th {
    padding: 3px 0 0;
    text-align: left;
}

.group div {
    height: 19px;
    padding: 0 5px 3px 2px;
    background: #9ab3cf;
    font-weight: 600;
    display: flex;
    align-items: center;
    justify-content: space-between;
}

.group svg {
    width: 8px;
    height: 10px;
}

.flip {
    transform: scaleY(-1);
}

.unused {
    color: #8a8a8a;
}

.filler td {
    height: 75px;
}

.selected {
    display: inline-block;
    background: #0c6ca6;
    color: #fff;
}

td input {
    display: block;
    width: 13px;
    height: 13px;
    margin: 2px 0 0 1px;
    border: 1px solid #333;
    background: #fff;
    appearance: none;
}

.tools-row {
    margin-top: 12px;
    margin-left: -3px;
    display: flex;
    align-items: center;
}

.icon-btn.sort {
    margin-left: 14px;
}

.btn {
    width: 76px;
    height: 22px;
    border: 1px solid #adadad;
    background: #e1e1e1;
    font-size: 10px;
}

.btn.default {
    border: 2px solid #2273a8;
}

.btn.lookup {
    width: 124px;
    margin-left: auto;
    margin-right: 1px;
}

.footer-row {
    margin-top: 14px;
    margin-right: 1px;
    display: flex;
    align-items: flex-start;
    gap: 8px;
}

.footer-row a {
    margin-right: auto;
    color: #1a6294;
    font-size: 10px;
}

.dialog .grip {
    position: absolute;
    right: 2px;
    bottom: 2px;
}

/* status bar */
.statusbar {
    height: 24px;
    padding: 0 72px 1px 0;
    background: #cbcbcb;
    display: flex;
    align-items: center;
    justify-content: space-between;
}

.status-icons {
    display: flex;
    align-items: center;
    gap: 9px;
}

.status-icons svg {
    width: 17px;
    height: 17px;
    fill: #999;
}

.status-icons span {
    margin-left: -9px;
}
```
